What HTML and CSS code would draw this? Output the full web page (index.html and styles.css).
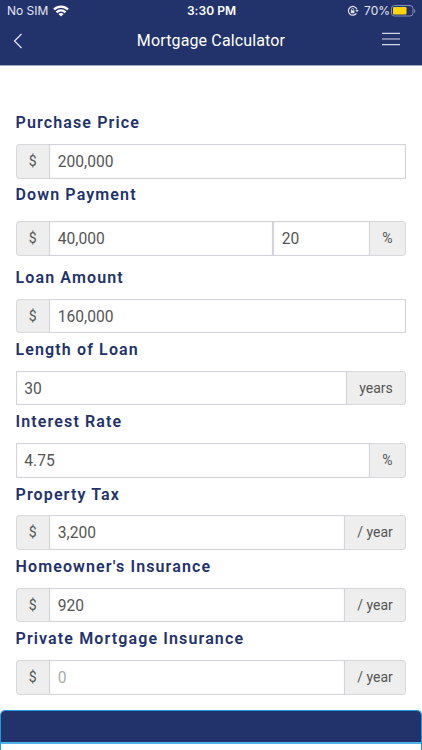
FILE: index.html
```html
<!DOCTYPE html>
<html lang="en">
<head>
<meta charset="utf-8">
<title>Mortgage Calculator</title>
<link rel="stylesheet" href="styles.css">
</head>
<body>
<header class="header">
  <div class="status">
    <div class="status-left">
      <span class="carrier">No SIM</span>
      <svg class="wifi" width="16" height="12" viewBox="0 0 16 12" fill="none" stroke="#fff" stroke-width="2.4"><path d="M1 4.5C5 .6 11 .6 15 4.5"/><path d="M3.5 7.3c2.6-2.5 6.4-2.5 9 0"/><path d="M8 11.6 5.4 9c1.5-1.3 3.7-1.3 5.2 0z" fill="#fff" stroke="none"/></svg>
    </div>
    <span class="time">3:30 PM</span>
    <div class="status-right">
      <svg class="lock" width="12" height="12" viewBox="0 0 12 12" fill="none" stroke="#e4e7f3"><path d="M9.4 8.4A4.4 4.4 0 1 1 10 4.4" stroke-width="1.2"/><path d="M8.4 5h3.2L10 7.2z" fill="#e4e7f3" stroke="none"/><path d="M3.8 5.4h3.6v2.8H3.8z" fill="#e4e7f3" stroke="none"/><path d="M4.5 5.5V4.6a1.1 1.1 0 0 1 2.2 0v.9" stroke-width=".8"/></svg>
      <span class="percent">70%</span>
      <svg class="battery" width="25" height="12" viewBox="0 0 25 12"><rect x=".5" y=".5" width="21.5" height="10.5" rx="3" fill="none" stroke="#8490b8"/><rect x="2" y="2" width="13.5" height="7.5" rx="1.2" fill="#ffd60a"/><path d="M23.2 4v4c1.5-.7 1.5-3.3 0-4z" fill="#8490b8"/></svg>
    </div>
  </div>
  <nav class="nav">
    <svg width="10" height="16" viewBox="0 0 10 16" fill="none" stroke="#e4e7f3" stroke-width="1.2"><path d="M8.5 1 1.5 8l7 7"/></svg>
    <h1 class="title">Mortgage Calculator</h1>
    <svg class="menu" width="18" height="14" viewBox="0 0 18 14" stroke="#d3d7e8" stroke-width="1.2"><path d="M0 1.3h18M0 7h18M0 12.6h18"/></svg>
  </nav>
</header>
<main class="form">
  <div class="group"><label class="label">Purchase Price</label><div class="row"><span class="addon">$</span><div class="field">200,000</div></div></div>
  <div class="group spaced"><label class="label">Down Payment</label><div class="row"><span class="addon">$</span><div class="field">40,000</div><div class="field rate">20</div><span class="addon pct">%</span></div></div>
  <div class="group"><label class="label">Loan Amount</label><div class="row"><span class="addon">$</span><div class="field">160,000</div></div></div>
  <div class="group"><label class="label">Length of Loan</label><div class="row"><div class="field">30</div><span class="addon years">years</span></div></div>
  <div class="group"><label class="label">Interest Rate</label><div class="row"><div class="field">4.75</div><span class="addon pct">%</span></div></div>
  <div class="group"><label class="label">Property Tax</label><div class="row"><span class="addon">$</span><div class="field">3,200</div><span class="addon year">/ year</span></div></div>
  <div class="group"><label class="label">Homeowner's Insurance</label><div class="row"><span class="addon">$</span><div class="field">920</div><span class="addon year">/ year</span></div></div>
  <div class="group"><label class="label">Private Mortgage Insurance</label><div class="row"><span class="addon">$</span><div class="field placeholder">0</div><span class="addon year">/ year</span></div></div>
</main>
<section class="panel"><div class="panel-head"></div><div class="panel-body"></div></section>
</body>
</html>
```
FILE: styles.css
```css
* { box-sizing: border-box; }
body { margin: 0; height: 750px; overflow: hidden; background: #fff; font-family: Roboto, sans-serif; }
svg { display: block; flex: none; }
.header { height: 66px; background: #22326b; color: #fff; border-bottom: 1px solid #a0a7c3; }
.status { height: 22px; padding: 0 6px 0 7px; display: grid; grid-template-columns: 1fr auto 1fr; align-items: center; font: 12px/22px Inter, sans-serif; color: #e4e7f3; }
.status-left { display: flex; align-items: center; gap: 5px; }
.carrier { letter-spacing: 0; }
.time { font-weight: 600; color: #fff; letter-spacing: .05px; }
.status-right { display: flex; align-items: center; justify-content: flex-end; }
.percent { margin: 0 1px 0 5px; }
.nav { height: 36px; padding: 1px 22px 0 13px; display: flex; align-items: center; justify-content: space-between; }
.title { margin: 0 0 0 17px; font-size: 16px; line-height: 24px; font-weight: 400; letter-spacing: .14px; }
.menu { margin-top: -4px; }
.form { padding: 40.2px 16px 0 15.5px; color: #555; }
.group { height: 72.3px; }
.label { display: block; height: 37.8px; line-height: 33px; font-size: 16px; font-weight: 600; letter-spacing: 1.13px; color: #22326b; }
.spaced { height: 82.3px; }
.spaced .label { height: 42.8px; }
.row { display: flex; height: 34.6px; }
.field { flex: 1; min-width: 0; padding: 0 7.8px; border: 1px solid #d3d4da; box-shadow: inset 0 0 1px #d3d4da; font-size: 15.6px; line-height: 35px; }
.addon { width: 33.5px; flex: none; border: 1px solid #d8d8dc; background: #eee; font-size: 14px; line-height: 32px; text-align: center; }
.addon:first-child { border-right: 0; border-radius: 4px 0 0 4px; }
.addon:last-child { border-left: 0; border-radius: 0 4px 4px 0; }
.rate { flex: 0 0 97px; }
.addon.pct { width: 36px; }
.addon.years { width: 59px; }
.addon.year { width: 61px; }
.placeholder { color: #aaa; }
.panel { height: 60px; margin-top: 15.4px; border: 1px solid #1d9ce0; border-width: 1px 1px 0; border-radius: 5px 5px 0 0; overflow: hidden; }
.panel-head { height: 31px; background: #22326b; }
.panel-body { height: 28px; border-top: 2px solid #4fb3e8; }
```
